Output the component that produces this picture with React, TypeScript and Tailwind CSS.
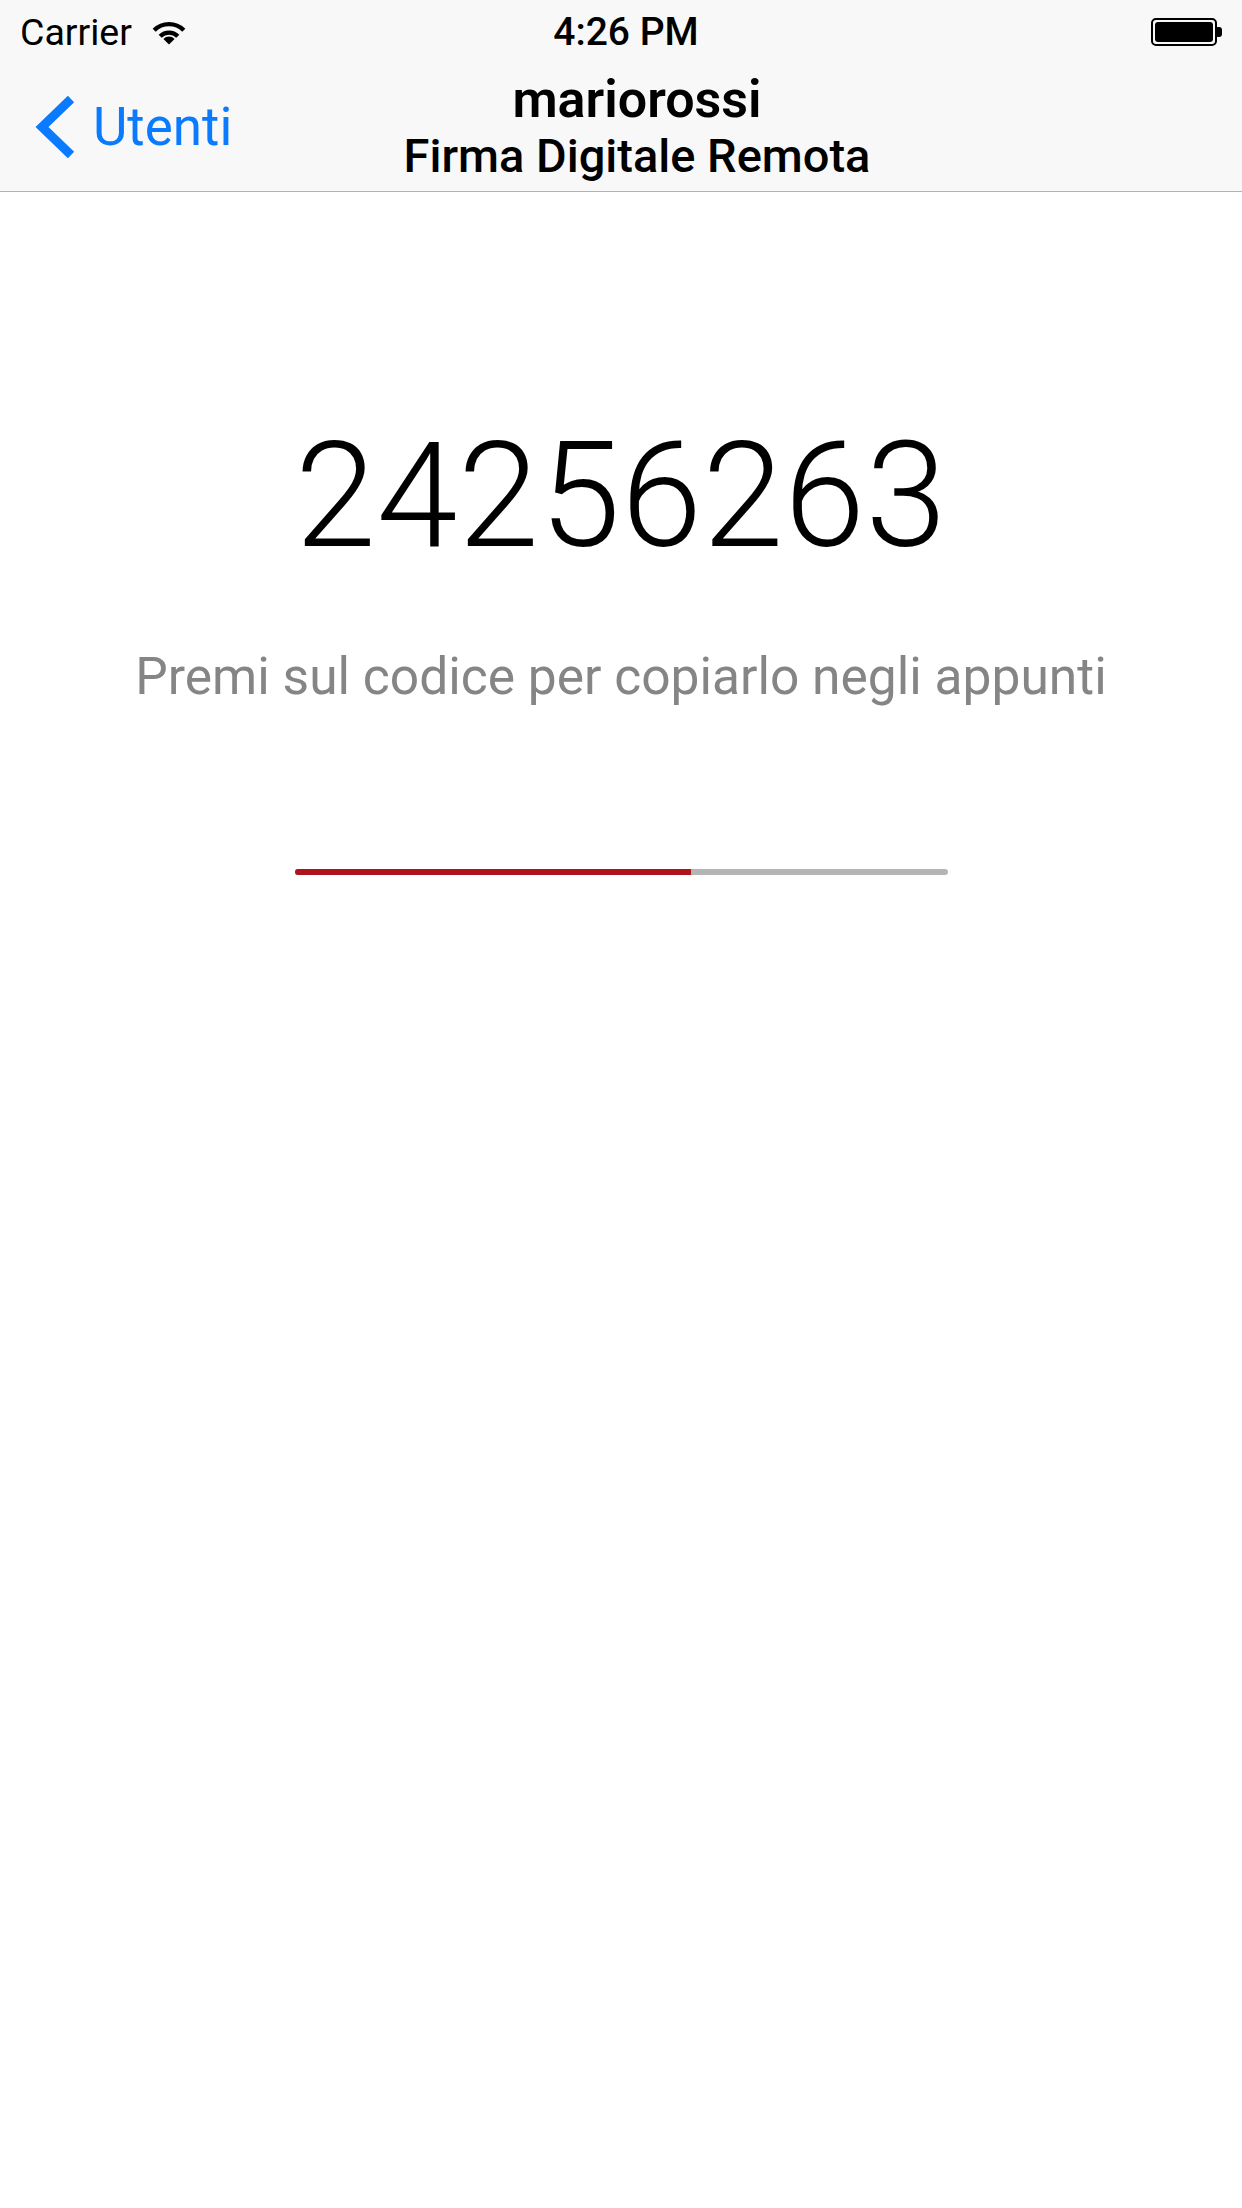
import React from "react";

function Wifi() {
  return (
    <svg width="36" height="27" viewBox="0 0 36 27" className="block">
      <path d="M3.2 12.2 A21 21 0 0 1 32.8 12.2" fill="none" stroke="#000" strokeWidth="4.4" />
      <path d="M9.2 18.2 A12.5 12.5 0 0 1 26.8 18.2" fill="none" stroke="#000" strokeWidth="4.4" />
      <path d="M18 26.5 L12.4 20.9 A8 8 0 0 1 23.6 20.9 Z" fill="#000" />
    </svg>
  );
}

function Battery() {
  return (
    <div className="flex items-center">
      <div className="w-[66px] h-[28px] rounded-[5px] border-[2px] border-black p-[2px]">
        <div className="w-full h-full rounded-[3px] bg-black" />
      </div>
      <div className="w-[5px] h-[10px] rounded-r-[3px] bg-black" />
    </div>
  );
}

function Chevron() {
  return (
    <svg width="48" height="68" viewBox="0 0 48 68" className="block">
      <polyline
        points="37,6 8,34 37,62"
        fill="none"
        stroke="#0a7aff"
        strokeWidth="9"
        strokeLinecap="butt"
        strokeLinejoin="miter"
      />
    </svg>
  );
}

export default function App() {
  const progress = 396 / 653;
  return (
    <div className="w-[1242px] h-[2208px] bg-white flex flex-col font-['Roboto','Liberation_Sans',sans-serif] text-black">
      <header className="bg-[#f8f8f8] border-b border-[#b2b2b2]">
        <div className="h-[60px] pt-[3px] px-[20px] grid grid-cols-[1fr_auto_1fr] items-center">
          <div className="flex items-center gap-[19px]">
            <span className="text-[37.5px] leading-[36px]">Carrier</span>
            <Wifi />
          </div>
          <span className="pl-[10px] text-[39px] leading-[36px] font-medium">4:26 PM</span>
          <div className="flex justify-end">
            <Battery />
          </div>
        </div>
        <div className="h-[131px] grid grid-cols-[1fr_auto_1fr]">
          <div className="flex items-center pl-[34px] pt-[3px] gap-[11px]">
            <Chevron />
            <span className="text-[53px] leading-[53px] text-[#0a7aff]">Utenti</span>
          </div>
          <div className="flex flex-col items-center pt-[12px] pl-[32px]">
            <span className="text-[52px] leading-[55px] font-semibold">mariorossi</span>
            <span className="text-[47px] leading-[58px] font-medium">Firma Digitale Remota</span>
          </div>
          <div />
        </div>
      </header>
      <main className="flex flex-col items-center">
        <div className="mt-[232px] text-[146px] leading-[146px] font-light tracking-[0.5px]">24256263</div>
        <div className="mt-[82px] text-[51.5px] leading-[50px] text-[#858585]">
          Premi sul codice per copiarlo negli appunti
        </div>
        <div className="mt-[167px] w-[653px] h-[6px] rounded-full bg-[#b5b5b5] overflow-hidden flex">
          <div className="h-full bg-[#ad141d]" style={{ width: `${progress * 100}%` }} />
        </div>
      </main>
    </div>
  );
}
